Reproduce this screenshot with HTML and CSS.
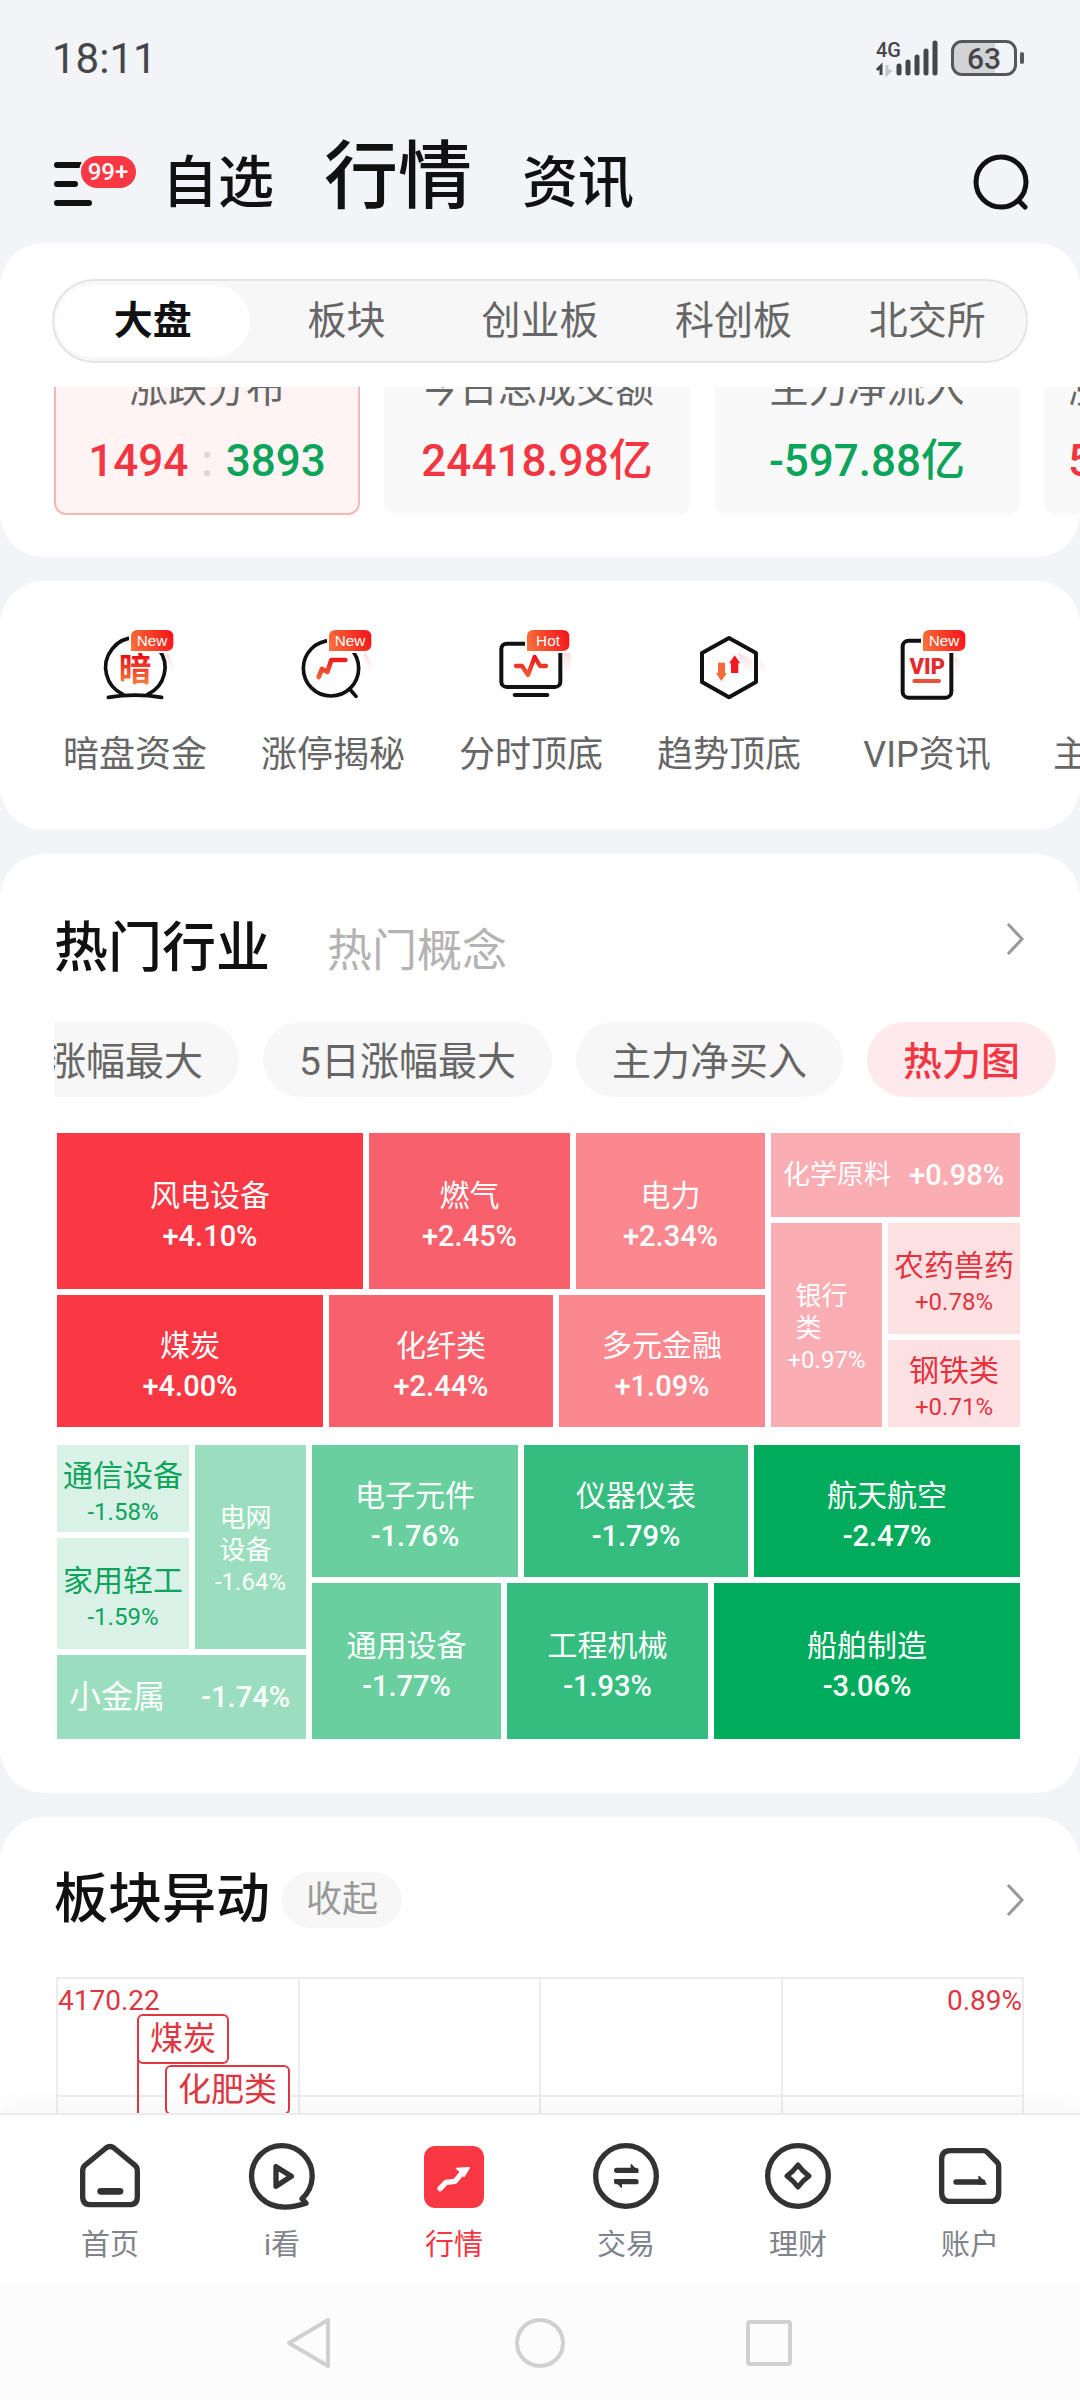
FILE: index.html
```html
<!DOCTYPE html>
<html lang="zh-CN">
<head>
<meta charset="utf-8">
<meta name="viewport" content="width=device-width, initial-scale=1">
<title>行情</title>
<link rel="stylesheet" href="styles.css">
</head>
<body>
<svg class="defs" width="0" height="0" aria-hidden="true">
  <defs>
    <linearGradient id="glyph" x1="0" y1="80" x2="0" y2="180" gradientUnits="userSpaceOnUse">
      <stop offset="0" stop-color="#e60012"/><stop offset="1" stop-color="#fb8040"/>
    </linearGradient>
    <linearGradient id="tag" x1="123" y1="70" x2="250" y2="20" gradientUnits="userSpaceOnUse">
      <stop offset="0" stop-color="#f8743a"/><stop offset="1" stop-color="#f5101a"/>
    </linearGradient>
    <linearGradient id="glow" x1="0" y1="80" x2="0" y2="170" gradientUnits="userSpaceOnUse">
      <stop offset="0" stop-color="#fbd5da"/><stop offset="1" stop-color="#fff" stop-opacity="0"/>
    </linearGradient>
  </defs>
</svg>
<div class="app">
  <div class="status">
    <span class="status-time">18:11</span>
    <div class="status-right">
      <svg width="66" height="38" viewBox="0 0 66 38" aria-hidden="true">
        <text x="1" y="18" class="net-label">4G</text>
        <path d="M6 36V27L2 31" fill="none" stroke="#44464a" stroke-width="3"/>
        <path d="M12 26V35L16 31" fill="none" stroke="#c4c6ca" stroke-width="3"/>
        <path d="M24 27V34M33 23V34M42 18V34M51 12V34M60 4V34" stroke="#44464a" stroke-width="5" stroke-linecap="round"/>
      </svg>
      <span class="battery">63</span><span class="battery-nub"></span>
    </div>
  </div>

  <header class="top">
    <button class="icon-btn" aria-label="菜单，99+ 条消息">
      <svg width="82" height="52" viewBox="0 0 82 52" aria-hidden="true">
        <path d="M3 9H26M3 28H21M3 47H35" stroke="#111" stroke-width="6" stroke-linecap="round"/>
        <rect x="25" y="-2" width="59" height="36" rx="18" fill="#f3f4f8"/>
        <rect x="27" y="0" width="55" height="32" rx="16" fill="#f93843"/>
        <text x="54" y="24" text-anchor="middle" class="menu-count">99+</text>
      </svg>
    </button>
    <nav class="top-nav">
      <a href="#">自选</a>
      <a href="#" class="is-active">行情</a>
      <a href="#">资讯</a>
    </nav>
    <button class="icon-btn top-search" aria-label="搜索">
      <svg width="58" height="60" viewBox="0 0 58 60" fill="none" stroke="#111" stroke-width="5" stroke-linecap="round" aria-hidden="true">
        <circle cx="29" cy="30" r="25"/><path d="M47 49L53 55"/>
      </svg>
    </button>
  </header>

  <main class="feed">
    <section class="panel overview">
      <nav class="segments">
        <button class="is-active">大盘</button>
        <button>板块</button>
        <button>创业板</button>
        <button>科创板</button>
        <button>北交所</button>
      </nav>
      <div class="stats">
        <article class="stat is-active">
          <h3>涨跌分布</h3>
          <p><span class="up">1494</span><span class="colon">:</span><span class="down">3893</span></p>
        </article>
        <article class="stat"><h3>今日总成交额</h3><p class="up">24418.98亿</p></article>
        <article class="stat"><h3>主力净流入</h3><p class="down">-597.88亿</p></article>
        <article class="stat stat-cut"><h3>涨停数</h3><p class="up">56</p></article>
      </div>
    </section>

    <section class="panel tools">
      <a href="#" class="tool">
        <svg width="90" height="80" viewBox="0 0 270 240" aria-hidden="true">
          <path d="M232 84Q252 105 254 150L240 165Q244 120 226 92Z" fill="url(#glow)"/>
          <path d="M99 208A89 89 0 1 1 173 208M55 217Q135 204 215 217" fill="none" stroke="#111" stroke-width="11" stroke-linecap="round"/>
          <text x="135" y="168" text-anchor="middle" class="glyph-cn" fill="url(#glyph)">暗</text>
          <path d="M143 15H230Q250 15 250 35V58Q250 78 230 78H123V35Q123 15 143 15Z" fill="url(#tag)" stroke="#fff" stroke-width="12" paint-order="stroke"/>
          <text x="186" y="62" text-anchor="middle" class="tag-text">New</text>
        </svg>
        <span>暗盘资金</span>
      </a>
      <a href="#" class="tool">
        <svg width="90" height="80" viewBox="0 0 270 240" aria-hidden="true">
          <path d="M232 84Q252 105 254 150L240 165Q244 120 226 92Z" fill="url(#glow)"/>
          <circle cx="129" cy="130" r="83" fill="none" stroke="#111" stroke-width="11"/>
          <path d="M185 192L204 214" stroke="#111" stroke-width="11" stroke-linecap="round"/>
          <path d="M92 156L102 132L118 141L130 105H172" fill="none" stroke="url(#glyph)" stroke-width="14" stroke-linecap="round" stroke-linejoin="round"/>
          <path d="M143 15H230Q250 15 250 35V58Q250 78 230 78H123V35Q123 15 143 15Z" fill="url(#tag)" stroke="#fff" stroke-width="12" paint-order="stroke"/>
          <text x="186" y="62" text-anchor="middle" class="tag-text">New</text>
        </svg>
        <span>涨停揭秘</span>
      </a>
      <a href="#" class="tool">
        <svg width="90" height="80" viewBox="0 0 270 240" aria-hidden="true">
          <path d="M232 84H254V140H232Z" fill="url(#glow)"/>
          <rect x="46" y="56" width="177" height="130" rx="16" fill="none" stroke="#111" stroke-width="12"/>
          <path d="M86 210H184" stroke="#111" stroke-width="12" stroke-linecap="round"/>
          <path d="M90 123H108L126 150L146 96L162 123H180" fill="none" stroke="url(#glyph)" stroke-width="13" stroke-linecap="round" stroke-linejoin="round"/>
          <path d="M143 15H230Q250 15 250 35V58Q250 78 230 78H123V35Q123 15 143 15Z" fill="url(#tag)" stroke="#fff" stroke-width="12" paint-order="stroke"/>
          <text x="186" y="62" text-anchor="middle" class="tag-text">Hot</text>
        </svg>
        <span>分时顶底</span>
      </a>
      <a href="#" class="tool">
        <svg width="90" height="80" viewBox="0 0 270 240" aria-hidden="true">
          <path d="M226 106L246 120V190L226 180ZM160 82L206 106V150L170 112Z" fill="url(#glow)"/>
          <path d="M135 39L216 84V171L135 217L54 171V84Z" fill="none" stroke="#111" stroke-width="12" stroke-linejoin="round"/>
          <path d="M102 113H123V144H129L112 168L96 144H102Z" fill="#f6693a"/>
          <path d="M141 144V115H135L152 91L169 115H163V144Z" fill="#ee1c22"/>
        </svg>
        <span>趋势顶底</span>
      </a>
      <a href="#" class="tool">
        <svg width="90" height="80" viewBox="0 0 270 240" aria-hidden="true">
          <path d="M216 96Q234 100 234 112V165H216Z" fill="url(#glow)"/>
          <rect x="62" y="47" width="146" height="171" rx="18" fill="none" stroke="#111" stroke-width="12"/>
          <text x="136" y="147" text-anchor="middle" class="glyph-vip">VIP</text>
          <path d="M97 168H171" stroke="#e9503a" stroke-width="12" stroke-linecap="round"/>
          <path d="M143 15H230Q250 15 250 35V58Q250 78 230 78H123V35Q123 15 143 15Z" fill="url(#tag)" stroke="#fff" stroke-width="12" paint-order="stroke"/>
          <text x="186" y="62" text-anchor="middle" class="tag-text">New</text>
        </svg>
        <span>VIP资讯</span>
      </a>
      <a href="#" class="tool"><i class="tool-blank"></i><span>主力追踪</span></a>
    </section>

    <section class="panel sectors">
      <div class="panel-head">
        <h2>热门行业</h2>
        <a href="#" class="alt-title">热门概念</a>
        <button class="icon-btn more" aria-label="更多">
          <svg width="20" height="34" viewBox="0 0 20 34" fill="none" stroke="#999" stroke-width="3" aria-hidden="true"><path d="M3 2L17 17L3 32"/></svg>
        </button>
      </div>
      <div class="chips">
        <button>3日涨幅最大</button>
        <button>5日涨幅最大</button>
        <button>主力净买入</button>
        <button class="is-active">热力图</button>
      </div>
      <div class="map map-up">
        <div class="bands">
          <div class="band b1">
            <div class="tile r1"><b>风电设备</b><em>+4.10%</em></div>
            <div class="tile r2"><b>燃气</b><em>+2.45%</em></div>
            <div class="tile r3"><b>电力</b><em>+2.34%</em></div>
          </div>
          <div class="band b2">
            <div class="tile r1"><b>煤炭</b><em>+4.00%</em></div>
            <div class="tile r2"><b>化纤类</b><em>+2.44%</em></div>
            <div class="tile r3"><b>多元金融</b><em>+1.09%</em></div>
          </div>
        </div>
        <div class="minor">
          <div class="tile wide r4"><b>化学原料</b><em>+0.98%</em></div>
          <div class="tile tall r4"><b>银行类</b><em>+0.97%</em></div>
          <div class="tile small s1 r5"><b>农药兽药</b><em>+0.78%</em></div>
          <div class="tile small s2 r5"><b>钢铁类</b><em>+0.71%</em></div>
        </div>
      </div>
      <div class="map map-down">
        <div class="minor">
          <div class="tile small s1 g5"><b>通信设备</b><em>-1.58%</em></div>
          <div class="tile tall g4"><b>电网设备</b><em>-1.64%</em></div>
          <div class="tile small s2 g5"><b>家用轻工</b><em>-1.59%</em></div>
          <div class="tile wide g4"><b>小金属</b><em>-1.74%</em></div>
        </div>
        <div class="bands">
          <div class="band b3">
            <div class="tile g3"><b>电子元件</b><em>-1.76%</em></div>
            <div class="tile g2"><b>仪器仪表</b><em>-1.79%</em></div>
            <div class="tile g1"><b>航天航空</b><em>-2.47%</em></div>
          </div>
          <div class="band b4">
            <div class="tile g3"><b>通用设备</b><em>-1.77%</em></div>
            <div class="tile g2"><b>工程机械</b><em>-1.93%</em></div>
            <div class="tile g1"><b>船舶制造</b><em>-3.06%</em></div>
          </div>
        </div>
      </div>
    </section>

    <section class="panel moves">
      <div class="panel-head">
        <h2>板块异动</h2>
        <button class="fold">收起</button>
        <button class="icon-btn more" aria-label="更多">
          <svg width="20" height="34" viewBox="0 0 20 34" fill="none" stroke="#999" stroke-width="3" aria-hidden="true"><path d="M3 2L17 17L3 32"/></svg>
        </button>
      </div>
      <div class="chart">
        <i></i><i></i><i></i><i></i>
        <i></i><i></i><i></i><i></i>
        <span class="axis axis-left">4170.22</span>
        <span class="axis axis-right">0.89%</span>
        <span class="stem"></span>
        <span class="flag flag-coal">煤炭</span>
        <span class="flag flag-fert">化肥类</span>
      </div>
    </section>
  </main>

  <nav class="tabbar">
    <a href="#">
      <svg width="72" height="72" viewBox="0 0 216 216" aria-hidden="true"><path d="M26 92Q26 82 33 76L96 24Q108 15 120 24L183 76Q190 82 190 92V170Q190 194 166 194H50Q26 194 26 170Z"/><path d="M80 154H138" stroke-width="20"/></svg>
      <span>首页</span>
    </a>
    <a href="#">
      <svg width="72" height="72" viewBox="0 0 216 216" aria-hidden="true"><path d="M168 176A91 91 0 1 0 45 174C78 207 130 206 180 190Z"/><path d="M90 80V139L136 109Z"/></svg>
      <span>i看</span>
    </a>
    <a href="#" class="is-active">
      <svg width="72" height="72" viewBox="0 0 216 216" aria-hidden="true"><rect x="18" y="18" width="180" height="186" rx="34" fill="#f93843" stroke="none"/><path d="M66 146L84 127L111 124L136 94" stroke="#fff"/><path d="M115 85L154 83L138 110L130 98Z" fill="#fff" stroke="#fff" stroke-width="4"/></svg>
      <span>行情</span>
    </a>
    <a href="#">
      <svg width="72" height="72" viewBox="0 0 216 216" aria-hidden="true"><circle cx="108" cy="108" r="91"/><path d="M80 91H138M80 125H138"/><path d="M124 74L144 97H124ZM94 142L74 119H94Z" fill="#333" stroke-width="4"/></svg>
      <span>交易</span>
    </a>
    <a href="#">
      <svg width="72" height="72" viewBox="0 0 216 216" aria-hidden="true"><circle cx="108" cy="108" r="91"/><path d="M108 75Q122 94 141 108Q122 122 108 141Q94 122 75 108Q94 94 108 75Z" stroke-width="15"/></svg>
      <span>理财</span>
    </a>
    <a href="#">
      <svg width="72" height="72" viewBox="0 0 216 216" aria-hidden="true"><path d="M49 32H148Q155 32 160 37L189 66Q194 71 194 78V158Q194 184 168 184H49Q23 184 23 158V58Q23 32 49 32Z"/><path d="M66 126H146"/><path d="M135 109L156 132H135Z" fill="#333" stroke-width="4"/></svg>
      <span>账户</span>
    </a>
  </nav>

  <div class="sysnav">
    <button class="icon-btn" aria-label="返回"><svg width="56" height="56" viewBox="0 0 56 56" aria-hidden="true"><path d="M45 5V51L6 28Z"/></svg></button>
    <button class="icon-btn" aria-label="主屏幕"><svg width="56" height="56" viewBox="0 0 56 56" aria-hidden="true"><circle cx="28" cy="28" r="23"/></svg></button>
    <button class="icon-btn" aria-label="最近任务"><svg width="56" height="56" viewBox="0 0 56 56" aria-hidden="true"><rect x="7" y="7" width="42" height="42" rx="2"/></svg></button>
  </div>
</div>
</body>
</html>
```
FILE: styles.css
```css
:root {
  --red: #f33641;
  --green: #0ba45a;
  --ink: #111;
  --grey: #666;
  --page: #f3f4f8;
}

* { box-sizing: border-box; }

body {
  margin: 0;
  background: var(--page);
  color: var(--ink);
  font-family: Roboto, "Noto Sans CJK SC", sans-serif;
}

h2, h3, p { margin: 0; font-weight: inherit; }
a { color: inherit; text-decoration: none; }
b, em { font-style: normal; font-weight: 400; }
svg { display: block; }
.defs { position: absolute; }

button {
  padding: 0;
  border: 0;
  background: none;
  color: inherit;
  font: inherit;
  white-space: nowrap;
}
.icon-btn { flex: none; }

.up { color: var(--red); }
.down { color: var(--green); }

.app {
  display: flex;
  flex-direction: column;
  height: 100vh;
}

/* status bar */
.status {
  flex: none;
  display: flex;
  justify-content: space-between;
  align-items: center;
  height: 116px;
  padding: 0 56px 0 52px;
  color: #44464a;
}
.status-time { font-size: 42px; }
.status-right { display: flex; align-items: center; }
.net-label { font-size: 20px; font-weight: 500; fill: #44464a; }
.battery {
  width: 66px;
  height: 36px;
  margin-left: 10px;
  border: 3px solid #55575b;
  border-radius: 11px;
  background: linear-gradient(90deg, #d2d3d6 68%, transparent 68%);
  font-size: 30px;
  font-weight: 500;
  line-height: 31px;
  text-align: center;
}
.battery-nub {
  width: 4px;
  height: 12px;
  margin-left: 3px;
  border-radius: 2px;
  background: #55575b;
}

/* page header */
.top {
  flex: none;
  display: flex;
  align-items: center;
  height: 127px;
  padding: 4px 50px 0 54px;
}
.top .icon-btn svg { overflow: visible; }
.menu-count { font-size: 24px; font-weight: 500; fill: #fff; }
.top-nav {
  display: flex;
  align-items: baseline;
  gap: 50px;
  margin-left: 26px;
  padding-bottom: 4px;
  font-size: 56px;
  font-weight: 500;
  line-height: 96px;
}
.top-nav .is-active { font-size: 74px; }
.top-search { margin-left: auto; }

/* content */
.feed {
  flex: 1;
  min-height: 0;
  display: flex;
  flex-direction: column;
  gap: 24px;
  overflow: hidden;
}
.panel {
  flex: none;
  border-radius: 44px;
  background: #fff;
}

.overview { padding: 36px 0 42px; }
.segments {
  display: grid;
  grid-template-columns: repeat(5, 1fr);
  height: 84px;
  margin: 0 52px 24px;
  padding: 4px 2px;
  border: 2px solid #e4e4e4;
  border-radius: 42px;
  background: #f7f7f7;
  color: var(--grey);
  font-size: 39px;
}
.segments button { padding-bottom: 8px; border-radius: 36px; }
.segments .is-active {
  background: #fff;
  color: var(--ink);
  font-weight: 700;
}

.stats {
  display: flex;
  align-items: flex-end;
  gap: 24px;
  height: 128px;
  padding-left: 54px;
  overflow: hidden;
}
.stat {
  flex: none;
  width: 306px;
  padding: 24px 0 22px;
  border: 2px solid transparent;
  border-radius: 12px;
  background: #f9f9f9;
  text-align: center;
}
.stat.is-active { border-color: #f5b9b3; background: #fff4f3; }
.stat h3 { color: var(--grey); font-size: 39px; line-height: 56px; }
.stat p {
  margin-top: 14px;
  font-size: 44px;
  font-weight: 500;
  line-height: 60px;
}
.colon { margin: 0 13px; color: #dcd3d3; }
.stat-cut { padding-left: 22px; text-align: left; }

/* tool shortcuts */
.tools {
  display: flex;
  padding: 44px 0 49px 36px;
  overflow: hidden;
}
.tool {
  flex: none;
  display: flex;
  flex-direction: column;
  align-items: center;
  gap: 24px;
  width: 198px;
  color: var(--grey);
  font-size: 36px;
  line-height: 52px;
}
.tool-blank { height: 80px; }
.glyph-cn { font-size: 98px; font-weight: 700; }
.glyph-vip { font-size: 66px; font-weight: 900; fill: #e42a2a; }
.tag-text { font-family: "Liberation Sans", sans-serif; font-size: 46px; fill: #fff; }

/* hot sectors */
.panel-head { display: flex; padding: 0 55px 0 54px; }
.panel-head h2 { font-size: 54px; font-weight: 500; }
.more { margin-left: auto; }

.sectors { padding: 57px 0 54px; }
.sectors .panel-head { align-items: baseline; line-height: 76px; }
.sectors .more { align-self: center; padding-bottom: 20px; }
.panel-head .alt-title {
  margin-left: 57px;
  color: #b3b3b3;
  font-size: 45px;
  line-height: 60px;
}

.chips {
  display: flex;
  justify-content: flex-end;
  gap: 24px;
  margin: 35px 0 36px 54px;
  padding-right: 24px;
  overflow: hidden;
}
.chips button {
  flex: none;
  height: 75px;
  padding: 0 36px 4px;
  border-radius: 38px;
  background: #f7f7f7;
  color: var(--grey);
  font-size: 39px;
}
.chips .is-active { background: #feeaec; color: var(--red); font-weight: 500; }

/* heat map */
.map {
  display: grid;
  gap: 6px;
  height: 294px;
  margin: 0 60px 0 57px;
}
.map-up { grid-template-columns: 708fr 249fr; margin-bottom: 18px; }
.map-down { grid-template-columns: 249fr 708fr; }
.bands { display: grid; gap: 6px; }
.map-up .bands { grid-template-rows: 156fr 132fr; }
.map-down .bands { grid-template-rows: 132fr 156fr; }
.band { display: grid; gap: 6px; }
.b1 { grid-template-columns: 306fr 201fr 189fr; }
.b2 { grid-template-columns: 266fr 224fr 206fr; }
.b3 { grid-template-columns: 206fr 224fr 266fr; }
.b4 { grid-template-columns: 189fr 201fr 306fr; }
.minor { display: grid; gap: 6px; }
.map-up .minor {
  grid-template: "wide wide" 84fr "tall s1" 111fr "tall s2" 87fr / 111fr 132fr;
}
.map-down .minor {
  grid-template: "s1 tall" 87fr "s2 tall" 111fr "wide wide" 84fr / 132fr 111fr;
}
.wide { grid-area: wide; }
.tall { grid-area: tall; }
.s1 { grid-area: s1; }
.s2 { grid-area: s2; }

.tile {
  display: flex;
  flex-direction: column;
  align-items: center;
  justify-content: center;
  min-width: 0;
  min-height: 0;
  padding-top: 10px;
  color: #fff;
  font-size: 30px;
  line-height: 40px;
  white-space: nowrap;
}
.tile em { font-size: 29px; font-weight: 500; }
.tile.wide {
  flex-direction: row;
  justify-content: space-between;
  padding: 0 16px 0 12px;
  font-size: 27px;
}
.map-down .wide { font-size: 32px; }
.tile.tall { padding-top: 6px; font-size: 26px; line-height: 32px; }
.tall b { width: 62px; white-space: normal; word-break: break-all; }
.tile.tall em, .tile.small em { font-size: 24px; font-weight: 400; }
.tile.small { line-height: 37px; }

.r1 { background: #f93843; }
.r2 { background: #f8616b; }
.r3 { background: #fc888f; }
.r4 { background: #fbadb4; }
.r5 { background: #fde0e2; color: #e4333f; }
.g1 { background: #00ab5c; }
.g2 { background: #35bd80; }
.g3 { background: #69cf9f; }
.g4 { background: #9adebe; }
.g5 { background: #d9f1e6; color: #0ba45a; }

/* sector moves */
.moves { padding-top: 55px; }
.moves .panel-head { align-items: center; line-height: 56px; }
.fold {
  width: 120px;
  height: 56px;
  margin-left: 12px;
  border-radius: 28px;
  background: #f7f7f7;
  color: #999;
  font-size: 36px;
}
.chart {
  position: relative;
  display: grid;
  grid-template-columns: repeat(4, 1fr);
  grid-auto-rows: 118px;
  margin: 49px 56px 0;
  border-top: 2px solid #ececec;
  border-left: 2px solid #ececec;
  color: #dd3742;
}
.chart i {
  border-right: 2px solid #ececec;
  border-bottom: 2px solid #ececec;
}
.axis { position: absolute; top: 6px; font-size: 28px; line-height: 32px; }
.axis-left { left: 0; }
.axis-right { right: 2px; }
.stem {
  position: absolute;
  top: 60px;
  bottom: 0;
  left: 79px;
  border-left: 2px solid #dd3742;
}
.flag {
  position: absolute;
  height: 50px;
  padding: 0 11px;
  border: 2px solid #dd3742;
  border-radius: 6px;
  background: #fff;
  font-size: 33px;
  line-height: 45px;
}
.flag-coal { top: 35px; left: 79px; }
.flag-fert { top: 86px; left: 107px; }

/* bottom tabs */
.tabbar {
  position: relative;
  flex: none;
  display: grid;
  grid-template-columns: repeat(6, 1fr);
  height: 172px;
  padding: 25px 24px 0;
  border-top: 2px solid #ebebeb;
  background: #fff;
  box-shadow: 0 -8px 24px rgba(0, 0, 0, 0.04);
  color: #7f838b;
  font-size: 29px;
  line-height: 40px;
}
.tabbar a {
  display: flex;
  flex-direction: column;
  align-items: center;
  gap: 13px;
}
.tabbar svg {
  fill: none;
  stroke: #333;
  stroke-width: 16;
  stroke-linecap: round;
  stroke-linejoin: round;
}
.tabbar .is-active { color: var(--red); }

.sysnav {
  position: relative;
  flex: none;
  display: flex;
  justify-content: center;
  align-items: center;
  gap: 173px;
  height: 115px;
  background: #fcfcfc;
}
.sysnav svg { fill: none; stroke: #d0d0d0; stroke-width: 4; stroke-linejoin: round; }
```
